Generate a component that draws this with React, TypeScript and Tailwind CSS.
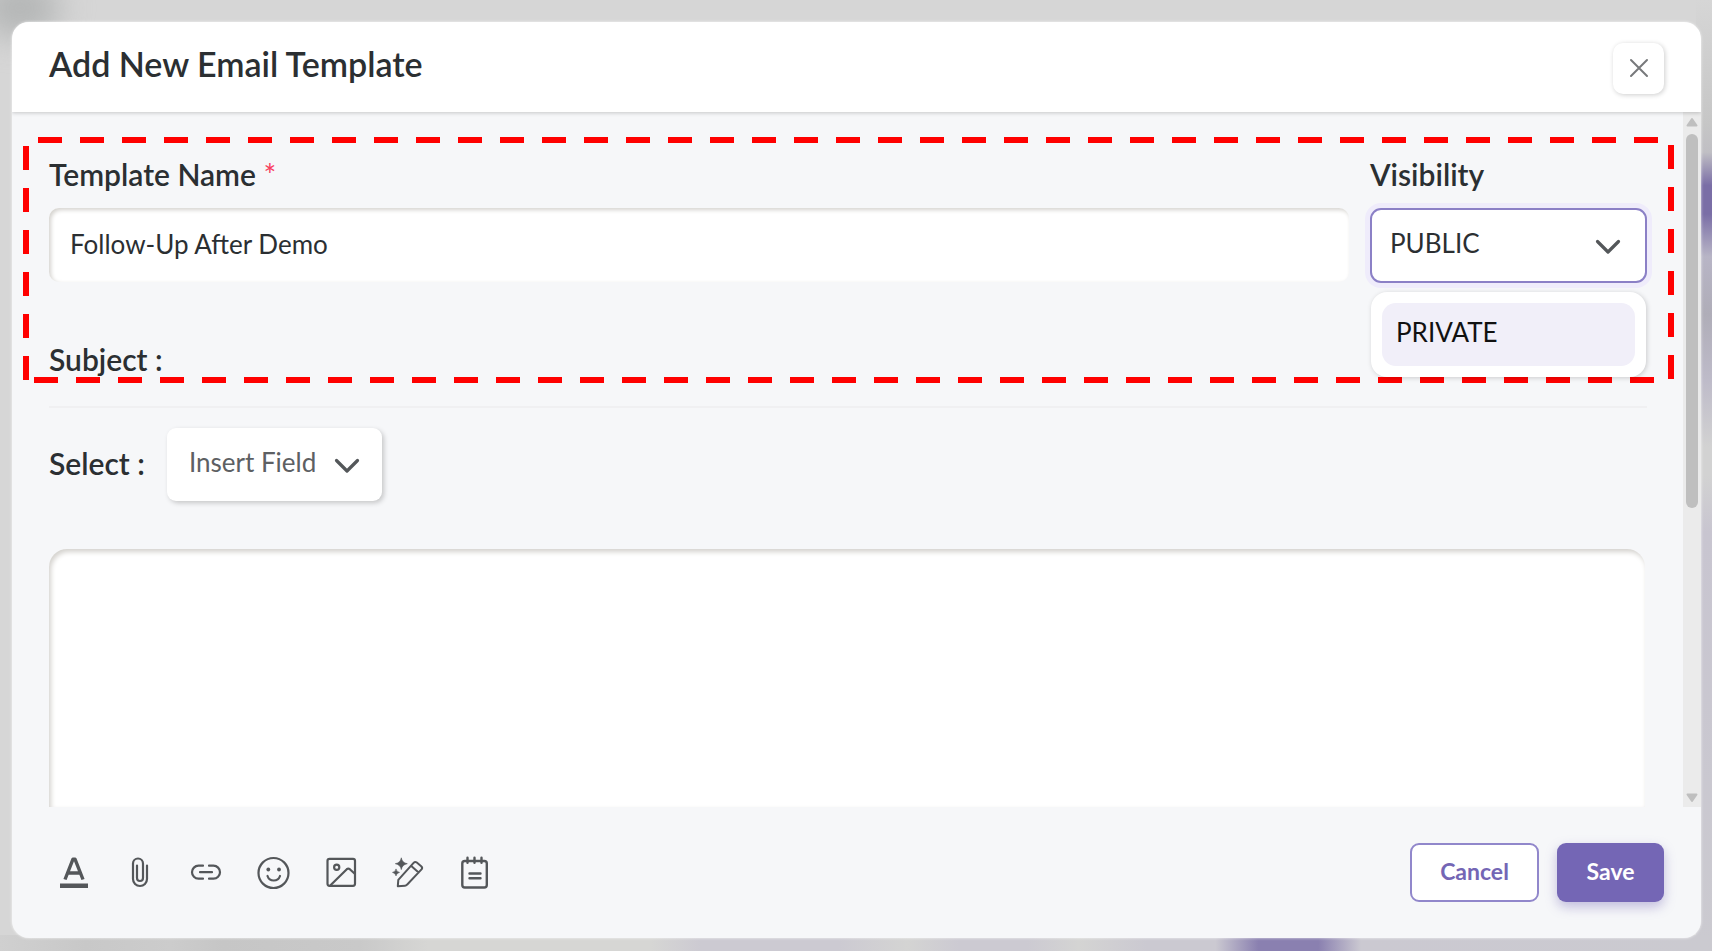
import React from "react";

const stroke = {
  fill: "none",
  stroke: "currentColor",
  strokeWidth: 2.2,
  strokeLinecap: "round" as const,
  strokeLinejoin: "round" as const,
};

const tools: { label: string; icon: React.ReactNode }[] = [
  {
    label: "Text formatting",
    icon: (
      <>
        <path d="M8 22.500 16 2.200h2l8 20.300M11 16h12" {...stroke} strokeWidth={3.4} strokeLinecap="butt" />
        <rect x="3" y="26.500" width="28" height="4.500" fill="currentColor" />
      </>
    ),
  },
  {
    label: "Attach file",
    icon: <path d="M23 8.500V22a7 7 0 0 1-14 0V6.500a5 5 0 0 1 10 0V21a3 3 0 0 1-6 0V8.500" {...stroke} />,
  },
  {
    label: "Insert link",
    icon: <path d="M12 8.700H7.500a6.500 6.500 0 0 0 0 13H12M18 8.700h4.500a6.500 6.500 0 0 1 0 13H18M9 15.200h12" {...stroke} />,
  },
  {
    label: "Insert emoji",
    icon: (
      <>
        <circle cx="15.500" cy="16" r="15" {...stroke} />
        <path d="M9.500 19c2 6 10.500 6 12.500 0" {...stroke} />
        <circle cx="10.300" cy="12.500" r="1.900" fill="currentColor" />
        <circle cx="21" cy="12.500" r="1.900" fill="currentColor" />
      </>
    ),
  },
  {
    label: "Insert image",
    icon: (
      <>
        <rect x="2.500" y="1.800" width="27.500" height="27" rx="2" {...stroke} />
        <circle cx="11.700" cy="10.300" r="2.600" {...stroke} />
        <path d="M5.500 28.200 21.800 12.200q1.500-1.300 3 0L29.500 16.500" {...stroke} />
      </>
    ),
  },
  {
    label: "Write with AI",
    icon: (
      <>
        <path d="M9.300.8q.8 5 6 5.900-5.200.9-6 5.900-.8-5-6-5.900 5.200-.9 6-5.900ZM4 11.900q.5 3 3.500 3.500-3 .5-3.500 3.500-.5-3-3.500-3.500 3-.5 3.500-3.500Z" fill="currentColor" stroke="currentColor" strokeWidth={0.6} />
        <path d="M5.800 29.200 6.300 22.800 21.600 5.800q1.500-1.600 3.200-.2l4.400 3.600q1.700 1.500.3 3.200L15 27.700q-.8.9-2 1ZM5.800 29.200l7.200-.5M19 8.700l7.600 6.800" {...stroke} strokeWidth={2} />
      </>
    ),
  },
  {
    label: "Notes",
    icon: (
      <>
        <rect x="3.300" y="4" width="24.500" height="26.500" rx="2.500" {...stroke} strokeWidth={2.4} />
        <path d="M8.500.8v5M15.500.8v5M22.500.8v5M10.500 16.500h11M10.500 21.300h11" {...stroke} strokeWidth={2.4} />
      </>
    ),
  },
];

function Chevron() {
  return (
    <svg viewBox="0 0 26 16" className="h-4 w-[26px] text-[#54575a]" aria-hidden="true">
      <path d="M2.500 2.500 13 13 23.500 2.500" {...stroke} strokeWidth={3.2} />
    </svg>
  );
}

function Highlight() {
  return (
    <div className="pointer-events-none absolute top-[25px] right-[27px] left-[11px] h-[246px]" aria-hidden="true">
      <div className="absolute top-0 right-4 left-[15px] h-1.5 bg-[repeating-linear-gradient(90deg,#ff0000_0_24px,transparent_24px_42px)]" />
      <div className="absolute right-5 bottom-0 left-[11px] h-1.5 bg-[repeating-linear-gradient(90deg,#ff0000_0_24px,transparent_24px_42px)]" />
      <div className="absolute top-[9px] bottom-[3px] left-0 w-1.5 bg-[repeating-linear-gradient(180deg,#ff0000_0_24px,transparent_24px_42px)]" />
      <div className="absolute top-2 right-0 bottom-1 w-1.5 bg-[repeating-linear-gradient(180deg,#ff0000_0_24px,transparent_24px_42px)]" />
    </div>
  );
}

function Scrollbar() {
  return (
    <div className="flex w-[18px] shrink-0 flex-col items-center justify-between bg-[#ebebeb] pt-[5px] pb-1 text-[#bfbfbf]" aria-hidden="true">
      <div className="flex h-[391px] flex-col items-center gap-[7px]">
        <svg viewBox="0 0 12 10" className="h-2.5 w-3">
          <path d="M6 2 10.500 8.500H1.500Z" fill="currentColor" stroke="currentColor" strokeWidth={2} strokeLinejoin="round" />
        </svg>
        <div className="w-3 flex-1 rounded-full bg-[#bfbfbf]" />
      </div>
      <svg viewBox="0 0 12 10" className="h-2.5 w-3">
        <path d="M6 8 10.500 1.500H1.500Z" fill="currentColor" stroke="currentColor" strokeWidth={2} strokeLinejoin="round" />
      </svg>
    </div>
  );
}

export default function App() {
  return (
    <main className="relative flex h-screen min-h-[640px] flex-col overflow-hidden bg-[#d6d6d6] pt-[22px] pr-[11px] pb-[13px] pl-3 font-['Lato',sans-serif] text-[#2b2f32]">
      <div className="absolute -top-5 -left-5 h-14 w-20 rounded-full bg-[#b4b6b6] blur-lg" />
      <div className="absolute inset-y-0 right-0 w-4 bg-[linear-gradient(180deg,#d6d6d6_0%,#c6c6c6_13%,#c0bfc4_16%,#7a6ea6_19.500%,#7a6ea6_22.500%,#b8b5c6_27%,#afadb8_33%,#bebbc9_40%,#d2d2d2_47%,#d2d2d2_50%,#c8c5d0_56%,#cbcad0_100%)]" />
      <div className="absolute inset-x-0 bottom-0 h-4 bg-[linear-gradient(90deg,#d0d0d0_0%,#c8c8c8_5%,#cccccc_10%,#c6c6c6_13%,#c9c9c9_21%,#d6d6d4_25%,#d6d6d4_38%,#cccad2_41%,#cccad2_49%,#d4d4d3_53%,#cccad2_56%,#cccad2_60%,#d4d4d3_63%,#cbc9d1_67%,#cbc9d1_71%,#8a80b0_73.500%,#8a80b0_77%,#cbc9d1_79.500%,#cbcad0_100%)]" />

      <section role="dialog" aria-labelledby="dialog-title" className="relative flex min-h-0 flex-1 flex-col overflow-hidden rounded-[17px] bg-[#f6f7f9] shadow-[0_0_3px_rgba(255,255,255,0.8)]">
        <header className="relative z-10 flex h-[90px] shrink-0 items-center justify-between bg-white pt-0.5 pr-[37px] pl-[37px] shadow-[0_1px_4px_rgba(0,0,0,0.2)]">
          <h1 id="dialog-title" className="pb-2 text-[34px] leading-10 font-semibold">Add New Email Template</h1>
          <button type="button" aria-label="Close" className="flex size-[51px] items-center justify-center rounded-[10px] bg-white text-[#77797b] shadow-[1px_1px_5px_rgba(0,0,0,0.2)]">
            <svg viewBox="0 0 20 20" className="size-5" aria-hidden="true">
              <path d="M2 2 18 18M18 2 2 18" {...stroke} strokeWidth={2} />
            </svg>
          </button>
        </header>

        <div className="relative flex min-h-0 flex-1">
          <form className="flex min-w-0 flex-1 flex-col overflow-hidden pt-11 pr-9 pl-[37px]">
            <div className="grid grid-cols-[1fr_277px] gap-[21px]">
              <div className="flex flex-col gap-4">
                <label htmlFor="template-name" className="text-[30px] leading-9 font-semibold">
                  Template Name <span className="font-normal text-[#f8405f]">*</span>
                </label>
                <input
                  id="template-name"
                  type="text"
                  defaultValue="Follow-Up After Demo"
                  className="h-[74px] w-full rounded-[10px] bg-white px-[21px] pb-0.5 text-[26px] leading-8 shadow-[inset_2px_2px_4px_#d4d2ce] outline-none"
                />
              </div>
              <div className="relative flex flex-col gap-4">
                <label htmlFor="visibility" className="text-[30px] leading-9 font-semibold">Visibility</label>
                <div className="relative">
                  <select
                    id="visibility"
                    defaultValue="PUBLIC"
                    className="h-[75px] w-full appearance-none rounded-[11px] border-2 border-[#8b80c6] bg-white pr-16 pb-1.5 pl-[18px] text-[26px] leading-8 ring-[5px] ring-[#efecfb] outline-none"
                  >
                    <option>PUBLIC</option>
                    <option>PRIVATE</option>
                  </select>
                  <div className="pointer-events-none absolute inset-y-0 right-[26px] flex items-center pt-0.5">
                    <Chevron />
                  </div>
                </div>
                <ul role="listbox" aria-label="Visibility options" className="absolute inset-x-px top-[136px] z-10 rounded-[16px] bg-white p-[11px] shadow-[1px_1px_5px_rgba(0,0,0,0.18)]">
                  <li role="option" aria-selected="false" className="flex h-[63px] items-center rounded-[14px] bg-[#f1eff9] px-[14px] pb-1.5 text-[26px] leading-8 text-[#111111]">
                    PRIVATE
                  </li>
                </ul>
              </div>
            </div>

            <div className="mt-[58px] border-b-2 border-[#f0f0f2] pb-[29px] text-[30px] leading-9 font-semibold">Subject :</div>

            <div className="mt-5 flex items-center gap-[22px]">
              <label htmlFor="insert-field" className="pb-1 text-[30px] leading-9 font-semibold">Select :</label>
              <div className="relative">
                <select
                  id="insert-field"
                  className="h-[73px] w-[215px] appearance-none rounded-[9px] bg-white pr-14 pb-1.5 pl-[22px] text-[26px] leading-8 text-[#5d6063] shadow-[2px_2px_5px_rgba(0,0,0,0.2)] outline-none"
                >
                  <option>Insert Field</option>
                </select>
                <div className="pointer-events-none absolute inset-y-0 right-[22px] flex items-center pt-0.5">
                  <Chevron />
                </div>
              </div>
            </div>

            <div className="mt-12 flex min-h-0 flex-1 pr-0.5">
              <textarea
                aria-label="Email body"
                className="w-full resize-none rounded-t-[18px] bg-white px-[22px] py-5 text-[26px] leading-8 shadow-[inset_2px_3px_5px_#d4d2ce] outline-none"
              />
            </div>
          </form>
          <Scrollbar />
          <Highlight />
        </div>

        <footer className="flex h-[131px] shrink-0 items-center justify-between pr-[37px] pl-[45px]">
          <div role="toolbar" aria-label="Message tools" className="flex gap-[35px] text-[#54575a]">
            {tools.map((t) => (
              <button key={t.label} type="button" aria-label={t.label} className="size-8">
                <svg viewBox="0 0 32 32" className="size-8 overflow-visible" aria-hidden="true">{t.icon}</svg>
              </button>
            ))}
          </div>
          <div className="flex gap-[18px]">
            <button type="button" className="h-[59px] w-[129px] rounded-[9px] border-2 border-[#9187cb] bg-white pb-1 text-[23px] leading-7 font-bold text-[#7466b5]">
              Cancel
            </button>
            <button type="button" className="h-[59px] w-[107px] rounded-[9px] bg-[#7466b5] pb-1 text-[23px] leading-7 font-bold text-white shadow-[0_5px_12px_rgba(116,102,181,0.4)]">
              Save
            </button>
          </div>
        </footer>
      </section>
    </main>
  );
}
